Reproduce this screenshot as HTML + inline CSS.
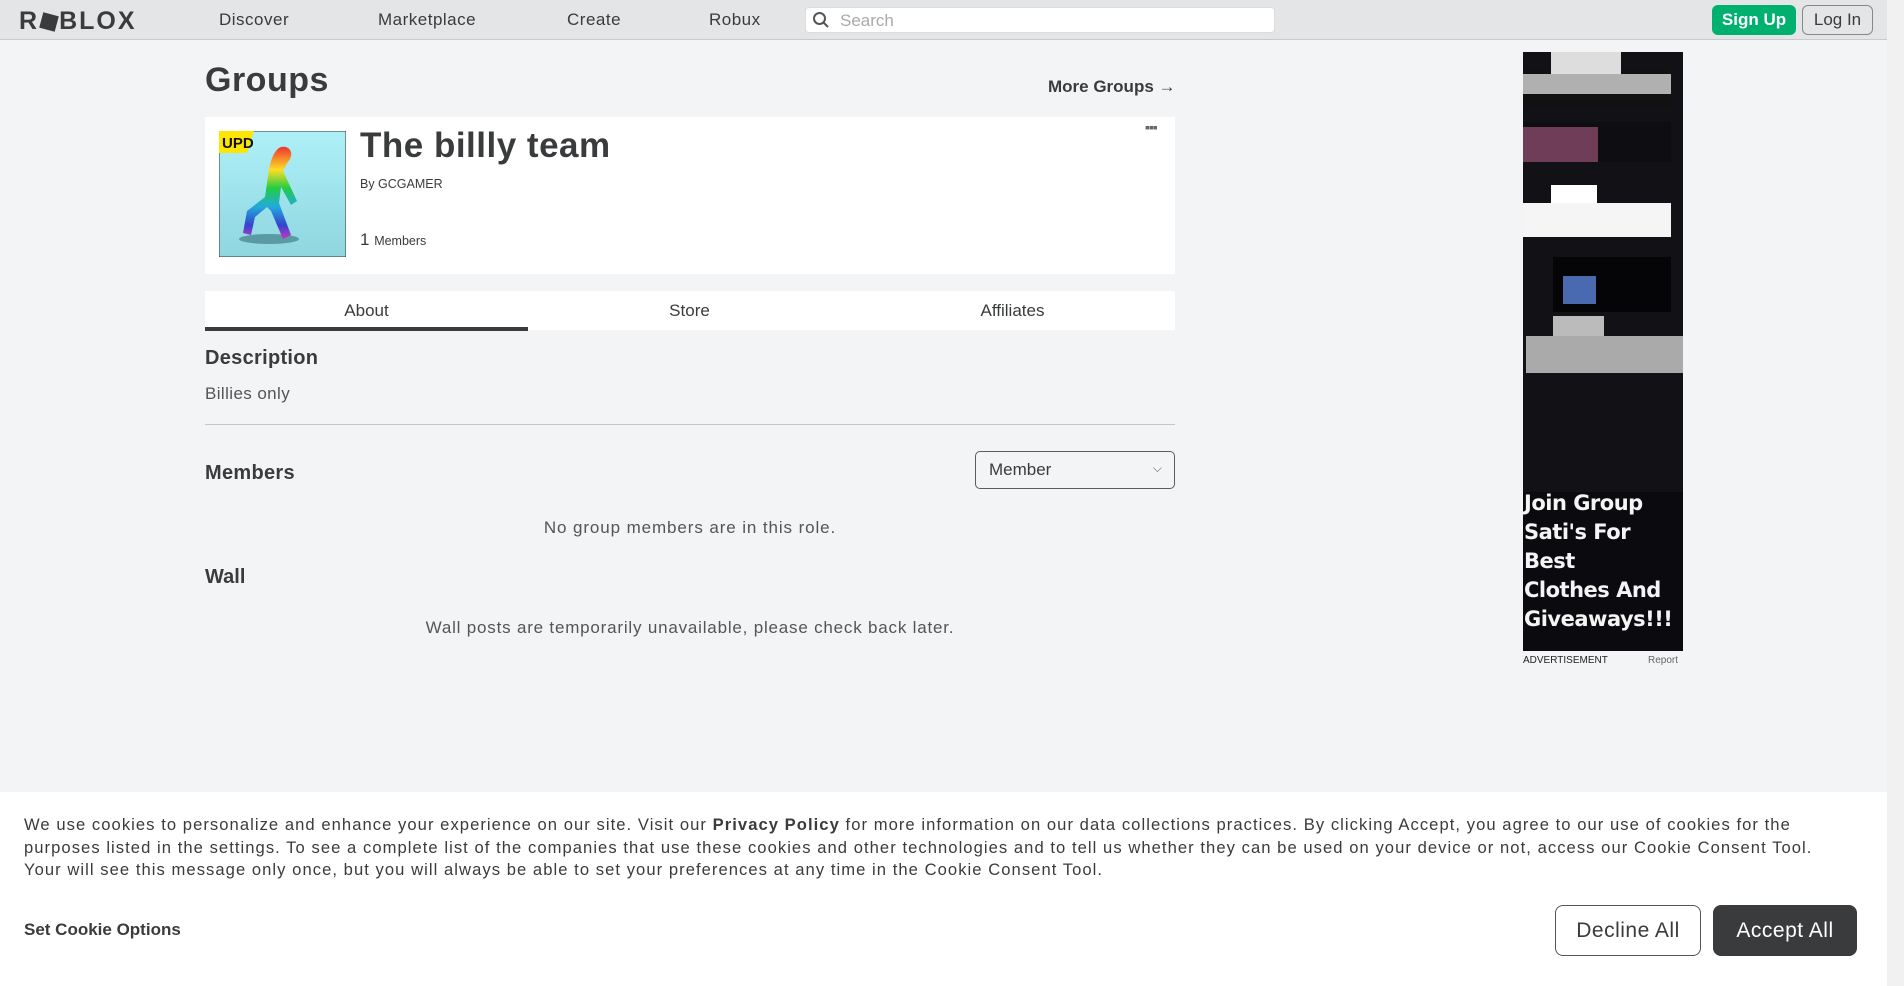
<!DOCTYPE html>
<html><head><meta charset="utf-8"><style>
*{box-sizing:border-box;margin:0;padding:0}
body{width:1904px;height:986px;overflow:hidden;background:#f2f4f5;font-family:"Liberation Sans",sans-serif;color:#393b3d;position:relative}
.hdr{position:absolute;left:0;top:0;width:1887px;height:40px;background:#e3e5e7;border-bottom:1px solid #c8cacc}
.hdr .logo{position:absolute;left:19px;top:7px;font-weight:bold;font-size:25px;letter-spacing:2px;color:#393b3d}
.nav{position:absolute;top:10px;font-size:17px;color:#393b3d;letter-spacing:.5px}
.search{position:absolute;left:805px;top:7px;width:470px;height:26px;background:#fff;border-radius:4px;border:1px solid #ddd}
.search span{position:absolute;left:34px;top:3px;font-size:17px;color:#aaa}
.btn-su{position:absolute;left:1712px;top:5px;width:84px;height:30px;background:#00b06f;border-radius:6px;color:#fff;font-size:17px;font-weight:bold;text-align:center;line-height:30px}
.btn-li{position:absolute;left:1802px;top:5px;width:71px;height:30px;border:1px solid #888;border-radius:6px;font-size:17px;text-align:center;line-height:28px;color:#393b3d}
.sb{position:absolute;left:1887px;top:0;width:17px;height:986px;background:#f1f1f1}
.abs{position:absolute}
.card{position:absolute;left:205px;top:117px;width:970px;height:157px;background:#fff}
.tabs{position:absolute;left:205px;top:291px;width:970px;height:39px;background:#fff}
.tab{position:absolute;top:0;width:323px;height:39px;text-align:center;line-height:40px;font-size:17px;color:#393b3d}
.cookie{position:absolute;left:0;top:792px;width:1887px;height:194px;background:#fff}
.ct{position:absolute;left:24px;top:22px;width:1820px;font-size:16.6px;line-height:22.5px;color:#393b3d;letter-spacing:1.05px}
.ad{position:absolute;left:1523px;top:52px;width:160px;height:599px;background:#0b0a0f;overflow:hidden}
</style></head><body>
<div class="hdr">
 <div class="logo">R<span style="display:inline-block;width:16px;height:16px;background:#393b3d;transform:rotate(15deg);margin:0 2px;position:relative;top:1px"></span>BLOX</div>
 <div class="nav" style="left:219px">Discover</div>
 <div class="nav" style="left:378px">Marketplace</div>
 <div class="nav" style="left:567px">Create</div>
 <div class="nav" style="left:709px">Robux</div>
 <div class="search"><svg class="abs" style="left:6px;top:3px" width="18" height="18" viewBox="0 0 18 18"><circle cx="7.5" cy="7.5" r="5.5" fill="none" stroke="#555" stroke-width="2"/><path d="M11.5 11.5L16 16" stroke="#555" stroke-width="2"/></svg><span>Search</span></div>
 <div class="btn-su">Sign Up</div>
 <div class="btn-li">Log In</div>
</div>
<div class="sb"></div>

<div class="abs" style="left:205px;top:61px;font-size:34px;font-weight:bold;letter-spacing:.5px">Groups</div>
<div class="abs" style="left:1048px;top:77px;font-size:17px;font-weight:bold">More Groups →</div>

<div class="card">
 <svg class="abs" style="left:14px;top:14px" width="127" height="126" viewBox="0 0 127 126">
  <defs><linearGradient id="bg" x1="0" y1="0" x2="0" y2="1"><stop offset="0" stop-color="#aef0f8"/><stop offset="1" stop-color="#8fd6df"/></linearGradient>
  <linearGradient id="rb" x1="0" y1="0" x2="0" y2="1"><stop offset="0" stop-color="#e33"/><stop offset=".25" stop-color="#fd2"/><stop offset=".45" stop-color="#2c4"/><stop offset=".65" stop-color="#2ad"/><stop offset=".85" stop-color="#34c"/><stop offset="1" stop-color="#c3c"/></linearGradient></defs>
  <rect width="127" height="126" fill="url(#bg)" stroke="#333" stroke-width="1"/>
  <path d="M0 0H35L28 22H0Z" fill="#ffe600"/>
  <text x="3" y="17" font-size="15" font-weight="bold" font-family="Liberation Sans" fill="#111">UPD</text>
  <ellipse cx="50" cy="108" rx="30" ry="5" fill="#5a9aa3"/>
  <path d="M62 16C72 14 76 24 68 32L64 40L78 70L72 74L62 56L60 72L72 104L64 108L52 80L48 76L36 86L32 104L24 102L28 80L46 66L50 38C52 28 56 18 62 16Z" fill="url(#rb)"/>
 </svg>
 <div class="abs" style="left:155px;top:9px;font-size:35px;font-weight:bold;letter-spacing:.5px">The billly team</div>
 <div class="abs" style="left:155px;top:60px;font-size:12.5px">By GCGAMER</div>
 <div class="abs" style="left:155px;top:113px;font-size:17px">1 <span style="font-size:12.5px">Members</span></div>
 <div class="abs" style="left:940px;top:2px;font-size:14px;letter-spacing:-1px;color:#666">▪▪▪</div>
</div>

<div class="tabs">
 <div class="tab" style="left:0">About</div>
 <div class="tab" style="left:323px">Store</div>
 <div class="tab" style="left:646px">Affiliates</div>
 <div class="abs" style="left:0;top:36px;width:323px;height:4px;background:#393b3d"></div>
</div>

<div class="abs" style="left:205px;top:347px;font-size:20px;font-weight:bold;letter-spacing:.3px">Description</div>
<div class="abs" style="left:205px;top:384px;font-size:17px;color:#555;letter-spacing:.4px">Billies only</div>
<div class="abs" style="left:205px;top:424px;width:970px;height:1px;background:#c4c6c8"></div>
<div class="abs" style="left:205px;top:462px;font-size:20px;font-weight:bold;letter-spacing:.3px">Members</div>
<div class="abs" style="left:975px;top:451px;width:200px;height:38px;border:1px solid #5a5c5e;border-radius:5px;font-size:17px;padding:8px 0 0 13px">Member<span style="position:absolute;right:12px;top:9px;font-size:12px;color:#666">⌵</span></div>
<div class="abs" style="left:205px;top:518px;width:970px;text-align:center;font-size:17px;color:#555;letter-spacing:.9px">No group members are in this role.</div>
<div class="abs" style="left:205px;top:566px;font-size:20px;font-weight:bold">Wall</div>
<div class="abs" style="left:205px;top:618px;width:970px;text-align:center;font-size:17px;color:#555;letter-spacing:.8px">Wall posts are temporarily unavailable, please check back later.</div>

<div class="ad">
 <div class="abs" style="left:0;top:0;width:160px;height:440px;background:#121116"></div>
 <div class="abs" style="left:0;top:18px;width:148px;height:38px;background:#111"></div>
 <div class="abs" style="left:28px;top:0;width:70px;height:22px;background:#ddd"></div>
 <div class="abs" style="left:0;top:22px;width:148px;height:20px;background:#d8d8d8;opacity:.8"></div>
 <div class="abs" style="left:0;top:70px;width:148px;height:40px;background:#0e0d12"></div>
 <div class="abs" style="left:0;top:75px;width:75px;height:35px;background:#8a4a6a;opacity:.8"></div>
 <div class="abs" style="left:28px;top:133px;width:46px;height:20px;background:#fff"></div>
 <div class="abs" style="left:0;top:151px;width:148px;height:34px;background:#f5f5f5"></div>
 <div class="abs" style="left:30px;top:205px;width:118px;height:55px;background:#050407"></div>
 <div class="abs" style="left:40px;top:224px;width:33px;height:28px;background:#4a6ab0"></div>
 <div class="abs" style="left:30px;top:264px;width:51px;height:22px;background:#bbb"></div>
 <div class="abs" style="left:3px;top:284px;width:157px;height:37px;background:#aaa"></div>
 <div style="position:absolute;left:1px;top:437px;color:#f4f4f4;font-weight:bold;font-size:21px;line-height:29px;letter-spacing:-.5px;font-family:'DejaVu Sans',sans-serif;white-space:nowrap">Join Group<br>Sati's For<br>Best<br>Clothes And<br>Giveaways!!!</div>
</div>
<div class="abs" style="left:1523px;top:655px;font-size:10px;color:#222">ADVERTISEMENT</div>
<div class="abs" style="left:1648px;top:655px;font-size:10px;color:#666">Report</div>

<div class="cookie">
 <div class="ct">We use cookies to personalize and enhance your experience on our site. Visit our <b>Privacy Policy</b> for more information on our data collections practices. By clicking Accept, you agree to our use of cookies for the purposes listed in the settings. To see a complete list of the companies that use these cookies and other technologies and to tell us whether they can be used on your device or not, access our Cookie Consent Tool. Your will see this message only once, but you will always be able to set your preferences at any time in the Cookie Consent Tool.</div>
 <div class="abs" style="left:24px;top:128px;font-size:17px;font-weight:bold">Set Cookie Options</div>
 <div class="abs" style="left:1555px;top:113px;width:146px;height:51px;border:1px solid #555;border-radius:8px;font-size:21px;text-align:center;line-height:49px;letter-spacing:.5px">Decline All</div>
 <div class="abs" style="left:1713px;top:113px;width:144px;height:51px;background:#393b3d;border-radius:8px;color:#fff;font-size:21px;text-align:center;line-height:51px;letter-spacing:.5px">Accept All</div>
</div>
</body></html>
